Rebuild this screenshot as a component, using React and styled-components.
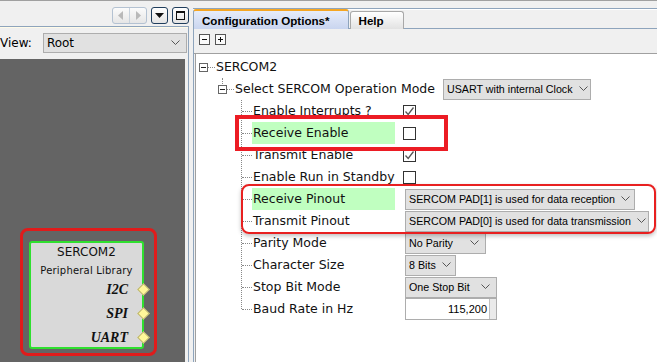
import React from 'react';
import styled, { createGlobalStyle } from 'styled-components';

const Global = createGlobalStyle`
  html, body { margin: 0; padding: 0; background: #f0f0f0; }
  body { font-family: "DejaVu Sans", Verdana, sans-serif; }
`;

const Frame = styled.div`
  display: flex;
  width: 657px;
  height: 362px;
  overflow: hidden;
  background: #f0f0f0;
  border-top: 1px solid #a0a0a0;
  box-sizing: border-box;
`;

/* ---------- left pane ---------- */

const LeftPane = styled.div`
  width: 189px;
  display: flex;
  flex-direction: column;
  flex-shrink: 0;
`;

const TopBar = styled.div`
  height: 25px;
  display: flex;
  justify-content: flex-end;
  align-items: flex-end;
  gap: 4px;
  padding-bottom: 2px;
  box-sizing: border-box;
`;

const NavGroup = styled.div`
  display: flex;
  border: 1px solid #b4c2d2;
  border-radius: 3px;
  background: linear-gradient(#fbfbfb, #e6e6e6);
  height: 15px;
`;

const NavHalf = styled.div`
  width: 16px;
  display: flex;
  align-items: center;
  justify-content: center;
  & + & { border-left: 1px solid #c8d2dc; }
`;

const WinButton = styled.div`
  width: 15px;
  height: 15px;
  border: 1px solid #1f3d5c;
  border-radius: 3px;
  background: linear-gradient(#ffffff, #e4e4e4);
  display: flex;
  align-items: center;
  justify-content: center;
`;

const ViewPanel = styled.div`
  flex: 1;
  display: flex;
  flex-direction: column;
  border-top: 1px solid #8ea4bc;
  border-right: 1px solid #8ea4bc;
  box-shadow: inset 0 1px #fffbe8;
`;

const ViewRow = styled.div`
  height: 32px;
  display: flex;
  align-items: center;
  gap: 11px;
  font-family: "DejaVu Sans", sans-serif;
  font-size: 12px;
  color: #000;
`;

const ViewSelect = styled.div`
  flex: 1;
  height: 20px;
  margin-right: 1px;
  border: 1px solid #adadad;
  background: #e1e1e1;
  display: flex;
  align-items: center;
  justify-content: space-between;
  padding: 0 6px 0 3px;
  font-family: "DejaVu Sans", sans-serif;
  font-size: 12px;
  box-sizing: border-box;
`;

const Canvas = styled.div`
  flex: 1;
  background: #646464;
  margin-right: 3px;
  position: relative;
`;

const NodeFrame = styled.div`
  position: absolute;
  left: 20px;
  top: 169px;
  width: 137px;
  height: 128px;
  border: 3px solid #e01b1b;
  border-radius: 8px;
  box-sizing: border-box;
  padding: 10px 10px 4px 6px;
`;

const NodeBox = styled.div`
  height: 100%;
  background: #d9d9d9;
  border: 2px solid #2fe02f;
  border-radius: 3px;
  box-sizing: border-box;
  display: flex;
  flex-direction: column;
  align-items: center;
`;

const NodeTitle = styled.div`
  font-family: "DejaVu Sans", sans-serif;
  font-size: 12px;
  margin-top: 1px;
  line-height: 16px;
  color: #111;
`;

const NodeSub = styled.div`
  font-family: "DejaVu Sans", sans-serif;
  font-size: 10px;
  line-height: 14px;
  margin-top: 4px;
  color: #111;
  letter-spacing: 0.2px;
`;

const Ports = styled.div`
  align-self: stretch;
  display: flex;
  flex-direction: column;
  gap: 7px;
  margin-top: 3px;
`;

const Port = styled.div`
  position: relative;
  height: 17px;
  line-height: 17px;
  text-align: right;
  padding-right: 14px;
  font-family: "Liberation Serif", serif;
  font-weight: bold;
  font-style: italic;
  font-size: 14px;
  color: #111;
`;

const Pin = styled.span`
  position: absolute;
  right: -6px;
  top: 4px;
  width: 7px;
  height: 7px;
  background: #fff79a;
  border: 1px solid #b8b070;
  transform: rotate(45deg);
`;

const Gap = styled.div`
  width: 4px;
  flex-shrink: 0;
`;

/* ---------- right pane ---------- */

const RightPane = styled.div`
  flex: 1;
  display: flex;
  flex-direction: column;
  min-width: 0;
`;

const TabStrip = styled.div`
  margin-top: 7px;
  height: 19px;
  border-top: 1px solid #8ea4bc;
  border-bottom: 1px solid #8ea4bc;
  box-shadow: inset 0 1px #ffffff;
  display: flex;
  align-items: flex-end;
  gap: 1px;
`;

const Tab = styled.div`
  height: ${p => (p.$active ? 20 : 18)}px;
  margin-bottom: -1px;
  padding: 0 ${p => (p.$active ? 18 : 19)}px 0 8px;
  display: flex;
  align-items: center;
  font-family: "Liberation Sans", Arial, sans-serif;
  font-weight: bold;
  font-size: 11.6px;
  color: #000;
  box-sizing: border-box;
  border: 1px solid ${p => (p.$active ? '#8ea4bc' : '#a8a8a8')};
  border-bottom: none;
  border-top: ${p => (p.$active ? '2px solid #f5a623' : '1px solid #a8a8a8')};
  background: ${p =>
    p.$active
      ? 'linear-gradient(#e6ecfa, #c9d5ef)'
      : 'linear-gradient(#ffffff, #e2e2e2)'};
  border-radius: 3px 3px 0 0;
`;

const Body = styled.div`
  flex: 1;
  display: flex;
  flex-direction: column;
  border-left: 1px solid #8ea4bc;
`;

const Toolbar = styled.div`
  height: 25px;
  display: flex;
  align-items: center;
  gap: 5px;
  padding-left: 5px;
  padding-bottom: 3px;
  box-sizing: border-box;
  border-bottom: 1px solid #a0a0a0;
`;

const ToolIcon = styled.div`
  width: 11px;
  height: 11px;
  border: 1px solid #555;
  background: #fafafa;
  box-sizing: border-box;
  position: relative;
  &::before, &::after {
    content: '';
    position: absolute;
    background: #111;
    left: 2px;
    top: 4px;
    width: 5px;
    height: 1px;
  }
  &::after {
    display: ${p => (p.$plus ? 'block' : 'none')};
    left: 4px;
    top: 2px;
    width: 1px;
    height: 5px;
  }
`;

const Content = styled.div`
  flex: 1;
  background: #ffffff;
  margin-left: 1px;
  border-left: 1px solid #a0a0a0;
  padding-top: 2px;
  position: relative;
  font-family: "DejaVu Sans", Verdana, sans-serif;
  font-size: 12.5px;
  color: #111;
`;

const Row = styled.div`
  height: 22px;
  display: flex;
  align-items: center;
  padding-left: ${p => p.$indent}px;
`;

const Expander = styled.span`
  width: 9px;
  height: 9px;
  border: 1px solid #666;
  box-sizing: border-box;
  position: relative;
  flex-shrink: 0;
  &::before {
    content: '';
    position: absolute;
    left: 1px;
    top: 3px;
    width: 5px;
    height: 1px;
    background: #222;
  }
  &::after {
    content: '';
    display: ${p => (p.$stub ? 'block' : 'none')};
    position: absolute;
    left: 3px;
    top: -8px;
    height: 6px;
    border-left: 1px dotted #888;
  }
`;

const HLine = styled.span`
  width: ${p => p.$w}px;
  border-top: 1px dotted #888;
  flex-shrink: 0;
`;

const Children = styled.div`
  position: relative;
  &::before {
    content: '';
    position: absolute;
    left: 45px;
    top: 0;
    bottom: 11px;
    border-left: 1px dotted #888;
  }
`;

const Label = styled.span`
  width: ${p => (p.$w ? `${p.$w}px` : 'auto')};
  height: 22px;
  line-height: 22px;
  padding-left: 1px;
  box-sizing: border-box;
  white-space: nowrap;
  flex-shrink: 0;
  background: ${p => (p.$hl ? '#c0ffc0' : 'transparent')};
  margin-left: ${p => p.$ml || 0}px;
`;

const Value = styled.div`
  margin-left: ${p => p.$ml}px;
  display: flex;
  align-items: center;
`;

const Check = styled.span`
  width: 13px;
  height: 13px;
  border: 1px solid #333;
  box-sizing: border-box;
  background: #fff;
  display: flex;
  align-items: center;
  justify-content: center;
`;

const Select = styled.div`
  height: 21px;
  width: ${p => p.$w}px;
  border: 1px solid #adadad;
  background: #e1e1e1;
  box-sizing: border-box;
  display: flex;
  align-items: center;
  justify-content: space-between;
  gap: 6px;
  padding: 0 6px 0 3px;
  font-family: "Liberation Sans", Arial, sans-serif;
  font-size: 10.7px;
  color: #000;
  white-space: nowrap;
`;

const NumberBox = styled.div`
  height: 22px;
  width: 92px;
  border: 1px solid #adadad;
  background: #fff;
  box-sizing: border-box;
  display: flex;
  align-items: center;
  justify-content: flex-end;
  font-family: "Liberation Sans", Arial, sans-serif;
  font-size: 11px;
  color: #000;
`;

const Spin = styled.span`
  width: 6px;
  align-self: stretch;
  margin-left: 2px;
  border-left: 1px solid #c0c0c0;
  background: #eaeaea;
`;

const Callout = styled.div`
  position: absolute;
  left: ${p => p.$x}px;
  top: ${p => p.$y}px;
  width: ${p => p.$w}px;
  height: ${p => p.$h}px;
  box-sizing: border-box;
  border: ${p => (p.$thick ? '4px solid #ec1c24' : '2px solid #e82020')};
  border-radius: ${p => (p.$thick ? 0 : 8)}px;
  box-shadow: ${p => (p.$thick ? 'none' : '0 2px 4px rgba(0,0,0,0.25)')};
  pointer-events: none;
`;

const Chevron = () => (
  <svg width="9" height="6" viewBox="0 0 9 6" style={{ flexShrink: 0 }}>
    <path d="M0.5 0.5 L4.5 4.5 L8.5 0.5" fill="none" stroke="#555" strokeWidth="1" />
  </svg>
);

const Tick = () => (
  <svg width="11" height="11" viewBox="0 0 11 11">
    <path d="M1.5 5.5 L4.2 8.5 L9.5 1.5" fill="none" stroke="#555" strokeWidth="1.3" />
  </svg>
);

const Drop = ({ w, children }) => (
  <Select $w={w}>
    <span>{children}</span>
    <Chevron />
  </Select>
);

const options = [
  { label: 'Enable Interrupts ?', check: true },
  { label: 'Receive Enable', check: false, hl: true },
  { label: 'Transmit Enable', check: true },
  { label: 'Enable Run in Standby', check: false },
  { label: 'Receive Pinout', select: 'SERCOM PAD[1] is used for data reception', w: 230, hl: true },
  { label: 'Transmit Pinout', select: 'SERCOM PAD[0] is used for data transmission', w: 244 },
  { label: 'Parity Mode', select: 'No Parity', w: 81 },
  { label: 'Character Size', select: '8 Bits', w: 51 },
  { label: 'Stop Bit Mode', select: 'One Stop Bit', w: 92 },
  { label: 'Baud Rate in Hz', number: '115,200' },
];

export default function App() {
  return (
    <>
      <Global />
      <Frame>
        <LeftPane>
          <TopBar>
            <NavGroup>
              <NavHalf>
                <svg width="6" height="9" viewBox="0 0 6 9"><path d="M5 0 L0 4.5 L5 9 Z" fill="#b9b9b9" /></svg>
              </NavHalf>
              <NavHalf>
                <svg width="6" height="9" viewBox="0 0 6 9"><path d="M1 0 L6 4.5 L1 9 Z" fill="#b9b9b9" /></svg>
              </NavHalf>
            </NavGroup>
            <WinButton>
              <svg width="9" height="5" viewBox="0 0 9 5"><path d="M0 0 H9 L4.5 5 Z" fill="#111" /></svg>
            </WinButton>
            <WinButton>
              <svg width="9" height="9" viewBox="0 0 9 9"><rect x="0.5" y="0.5" width="8" height="8" fill="none" stroke="#111" strokeWidth="1" /><rect x="0.5" y="0.5" width="8" height="1.5" fill="#111" /></svg>
            </WinButton>
          </TopBar>
          <ViewPanel>
            <ViewRow>
              <span>View:</span>
              <ViewSelect>
                <span>Root</span>
                <Chevron />
              </ViewSelect>
            </ViewRow>
            <Canvas>
              <NodeFrame>
                <NodeBox>
                  <NodeTitle>SERCOM2</NodeTitle>
                  <NodeSub>Peripheral Library</NodeSub>
                  <Ports>
                    {['I2C', 'SPI', 'UART'].map(p => (
                      <Port key={p}>
                        {p}
                        <Pin />
                      </Port>
                    ))}
                  </Ports>
                </NodeBox>
              </NodeFrame>
            </Canvas>
          </ViewPanel>
        </LeftPane>
        <Gap />
        <RightPane>
          <TabStrip>
            <Tab $active>Configuration Options*</Tab>
            <Tab>Help</Tab>
          </TabStrip>
          <Body>
            <Toolbar>
              <ToolIcon />
              <ToolIcon $plus />
            </Toolbar>
            <Content>
              <Row $indent={3}>
                <Expander />
                <HLine $w={7} />
                <Label>SERCOM2</Label>
              </Row>
              <Row $indent={22}>
                <Expander $stub />
                <HLine $w={7} />
                <Label>Select SERCOM Operation Mode</Label>
                <Value $ml={8}>
                  <Drop w={148}>USART with internal Clock</Drop>
                </Value>
              </Row>
              <Children>
                {options.map(o => (
                  <Row key={o.label} $indent={46}>
                    <HLine $w={10} />
                    <Label $w={143} $hl={o.hl}>{o.label}</Label>
                    {o.check !== undefined && (
                      <Value $ml={8}>
                        <Check>{o.check && <Tick />}</Check>
                      </Value>
                    )}
                    {o.select && (
                      <Value $ml={10}>
                        <Drop w={o.w}>{o.select}</Drop>
                      </Value>
                    )}
                    {o.number && (
                      <Value $ml={10}>
                        <NumberBox>
                          {o.number}
                          <Spin />
                        </NumberBox>
                      </Value>
                    )}
                  </Row>
                ))}
              </Children>
              <Callout $thick $x={39} $y={61} $w={213} $h={36} />
              <Callout $x={45} $y={130} $w={415} $h={50} />
            </Content>
          </Body>
        </RightPane>
      </Frame>
    </>
  );
}
